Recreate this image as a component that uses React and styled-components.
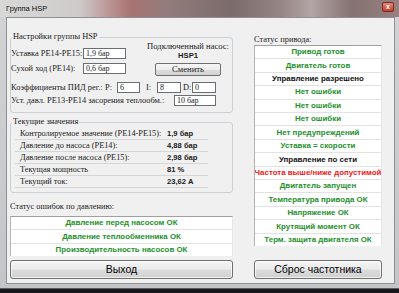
import React from 'react';
import styled, { createGlobalStyle } from 'styled-components';

const GlobalStyle = createGlobalStyle`
  html, body { margin: 0; padding: 0; }
  body {
    width: 399px;
    height: 293px;
    overflow: hidden;
    background: #1f2024;
    font-family: "Liberation Serif", serif;
  }
`;

const Desktop = styled.div`
  width: 399px;
  height: 293px;
  overflow: hidden;
  background: linear-gradient(180deg, #3a3a3e, #18181c);
`;

const Window = styled.div`
  width: 399px;
  height: 289px;
  box-sizing: border-box;
  display: flex;
  flex-direction: column;
  background: linear-gradient(180deg, #d2d3d5, #c3c5c8);
  border-bottom: 1px solid #5c5c60;
`;

const TitleBar = styled.div`
  height: 17px;
  flex-shrink: 0;
  display: flex;
  align-items: center;
  justify-content: space-between;
  padding: 0 5px 0 6px;
  background: linear-gradient(90deg, #d8d8d8 0%, #cfcaca 20%, #b99090 28%, #a87272 33%, #927c7c 42%, #7c6b6b 58%, #958484 70%, #b3a5a5 78%, #857272 88%, #9a8080 100%);
`;

const Title = styled.span`
  font: 7.5px/1 "Liberation Sans", Arial, sans-serif;
  color: #111;
`;

const CloseBox = styled.span`
  width: 12px;
  height: 10px;
  margin-top: -3px;
  border-radius: 2px;
  background: linear-gradient(180deg, #e08a7c, #c4402c);
  border: 1px solid #7a2a20;
  box-sizing: border-box;
  color: #fff;
  font: bold 7px/8px "Liberation Sans", sans-serif;
  text-align: center;
`;

const Frame = styled.div`
  flex: 1;
  display: flex;
  padding: 0 4px 4px 6px;
`;

const Client = styled.div`
  flex: 1;
  display: grid;
  grid-template-columns: 223px 128px;
  grid-template-rows: 1fr 19px;
  column-gap: 21px;
  row-gap: 4px;
  padding: 14px 12px 4px 3px;
  background: #f0f0f0;
  border: 1px solid #8d9196;
  color: #1a1a1a;
`;

const Column = styled.div`
  display: flex;
  flex-direction: column;
  min-width: 0;
`;

const GroupBox = styled.fieldset`
  margin: ${p => p.$mt || 0}px 0 0 0;
  padding: 0 0 ${p => p.$pb}px 0;
  border: 1px solid #cdd1d5;
  border-radius: 3px;
  min-width: 0;
`;

const Legend = styled.legend`
  margin-left: 1px;
  padding: 0 1px;
  font: 8.4px/10px "Liberation Serif", serif;
`;

const TopBlock = styled.div`
  display: flex;
  justify-content: space-between;
`;

const Fields = styled.div`
  display: flex;
  flex-direction: column;
  gap: 2px;
  padding-top: 5px;
`;

const Row = styled.div`
  display: flex;
  align-items: center;
  height: 13px;
  margin-top: ${p => p.$mt || 0}px;
`;

const Label = styled.span`
  width: ${p => p.$w}px;
  margin-left: ${p => p.$ml || 0}px;
  flex-shrink: 0;
  font: 8.4px/10px "Liberation Serif", serif;
  white-space: nowrap;
`;

const Input = styled.div`
  width: ${p => p.$w}px;
  height: 11px;
  box-sizing: border-box;
  border: 1px solid #6a6e72;
  background: #fff;
  padding-left: 2px;
  font: 8px/9px "Liberation Serif", serif;
  white-space: nowrap;
`;

const Pump = styled.div`
  width: 92px;
  margin-right: -2px;
  display: flex;
  flex-direction: column;
  align-items: center;
`;

const PumpCaption = styled.span`
  font: 8.6px/9px "Liberation Serif", serif;
  white-space: nowrap;
`;

const PumpName = styled.span`
  font: bold 7.6px/9px "Liberation Sans", Arial, sans-serif;
`;

const SmallButton = styled.div`
  margin-top: 3px;
  width: 66px;
  height: 13px;
  box-sizing: border-box;
  border: 1px solid #6f6f6f;
  border-radius: 2px;
  background: linear-gradient(180deg, #f6f6f6 0%, #ececec 50%, #dcdcdc 51%, #d2d2d2 100%);
  text-align: center;
  font: 8.6px/11px "Liberation Serif", serif;
`;

const ValueRows = styled.div`
  display: flex;
  flex-direction: column;
  margin: 1px 24px 0 4px;
`;

const ValueRow = styled.div`
  display: flex;
  align-items: center;
  height: 12px;
  box-sizing: border-box;
  border-bottom: 1px solid #d6d6d6;
  padding-left: 5px;
`;

const ValueLabel = styled.span`
  width: 147px;
  flex-shrink: 0;
  font: 8.3px/10px "Liberation Serif", serif;
  white-space: nowrap;
`;

const Value = styled.span`
  font: bold 7.6px/10px "Liberation Sans", Arial, sans-serif;
  white-space: nowrap;
`;

const Caption = styled.div`
  margin: ${p => p.$mt}px 0 ${p => p.$mb}px;
  font: 8.4px/10px "Liberation Serif", serif;
  white-space: nowrap;
`;

const StatusList = styled.div`
  display: flex;
  flex-direction: column;
  height: ${p => p.$h}px;
  box-sizing: border-box;
  background: #fff;
  border-top: 1px solid #a0a0a0;
  border-left: 1px solid #b4b4b4;
  border-right: 1px solid #e6e6e6;
`;

const StatusItem = styled.div`
  flex: 1;
  display: flex;
  align-items: center;
  justify-content: center;
  overflow: hidden;
  border-bottom: 1px solid #e2e2e2;
  font: bold 7.9px/1 "Liberation Sans", Arial, sans-serif;
  white-space: nowrap;
  color: ${p => (p.$tone === 'red' ? '#f01818' : p.$tone === 'black' ? '#111' : '#23902a')};
  &:last-child { border-bottom: none; }
`;

const Button = styled.div`
  display: flex;
  align-items: center;
  justify-content: center;
  box-sizing: border-box;
  border: 1px solid #707070;
  border-radius: 3px;
  background: linear-gradient(180deg, #f4f4f4 0%, #ebebeb 48%, #dddddd 52%, #cfcfcf 100%);
  box-shadow: inset 0 0 0 1px rgba(255, 255, 255, 0.7);
  font: 10.5px/1 "Liberation Sans", Arial, sans-serif;
  color: #000;
`;

const driveStatus = [
  ['Привод готов', 'green'],
  ['Двигатель готов', 'green'],
  ['Управление разрешено', 'black'],
  ['Нет ошибки', 'green'],
  ['Нет ошибки', 'green'],
  ['Нет ошибки', 'green'],
  ['Нет предупреждений', 'green'],
  ['Уставка = скорости', 'green'],
  ['Управление по сети', 'black'],
  ['Частота выше/ниже допустимой', 'red'],
  ['Двигатель запущен', 'green'],
  ['Температура привода ОК', 'green'],
  ['Напряжение ОК', 'green'],
  ['Крутящий момент ОК', 'green'],
  ['Терм. защита двигателя ОК', 'green'],
];

const pressureStatus = [
  'Давление перед насосом ОК',
  'Давление теплообменника ОК',
  'Производительность насосов ОК',
];

const currentValues = [
  ['Контролируемое значение (PE14-PE15):', '1,9 бар'],
  ['Давление до насоса (PE14):', '4,88 бар'],
  ['Давление после насоса (PE15):', '2,98 бар'],
  ['Текущая мощность', '81 %'],
  ['Текущий ток:', '23,62 А'],
];

export default function App() {
  return (
    <Desktop>
      <GlobalStyle />
      <Window>
        <TitleBar>
          <Title>Группа HSP</Title>
          <CloseBox>x</CloseBox>
        </TitleBar>
        <Frame>
          <Client>
            <Column>
              <GroupBox $pb={5}>
                <Legend>Настройки группы HSP</Legend>
                <TopBlock>
                  <Fields>
                    <Row>
                      <Label $w={72}>Уставка PE14-PE15:</Label>
                      <Input $w={43}>1,9 бар</Input>
                    </Row>
                    <Row>
                      <Label $w={72}>Сухой ход (PE14):</Label>
                      <Input $w={43}>0,6 бар</Input>
                    </Row>
                  </Fields>
                  <Pump>
                    <PumpCaption>Подключенный насос:</PumpCaption>
                    <PumpName>HSP1</PumpName>
                    <SmallButton>Сменить</SmallButton>
                  </Pump>
                </TopBlock>
                <Row $mt={5}>
                  <Label $w={94}>Коэффициенты ПИД рег.:</Label>
                  <Label $w={12}>P:</Label>
                  <Input $w={23}>6</Input>
                  <Label $w={11} $ml={6}>I:</Label>
                  <Input $w={24}>8</Input>
                  <Label $w={9} $ml={2}>D:</Label>
                  <Input $w={24}>0</Input>
                </Row>
                <Row>
                  <Label $w={163}>Уст. давл. PE13-PE14 засорения теплообм.:</Label>
                  <Input $w={42}>10 бар</Input>
                </Row>
              </GroupBox>

              <GroupBox $mt={4} $pb={4}>
                <Legend>Текущие значения</Legend>
                <ValueRows>
                  {currentValues.map(([label, value]) => (
                    <ValueRow key={label}>
                      <ValueLabel>{label}</ValueLabel>
                      <Value>{value}</Value>
                    </ValueRow>
                  ))}
                </ValueRows>
              </GroupBox>

              <Caption $mt={9} $mb={4}>Статус ошибок по давлению:</Caption>
              <StatusList $h={40}>
                {pressureStatus.map(text => (
                  <StatusItem key={text}>{text}</StatusItem>
                ))}
              </StatusList>
            </Column>

            <Column>
              <Caption $mt={3} $mb={0}>Статус привода:</Caption>
              <StatusList $h={201}>
                {driveStatus.map(([text, tone], i) => (
                  <StatusItem key={i} $tone={tone}>{text}</StatusItem>
                ))}
              </StatusList>
            </Column>

            <Button>Выход</Button>
            <Button>Сброс частотника</Button>
          </Client>
        </Frame>
      </Window>
    </Desktop>
  );
}
